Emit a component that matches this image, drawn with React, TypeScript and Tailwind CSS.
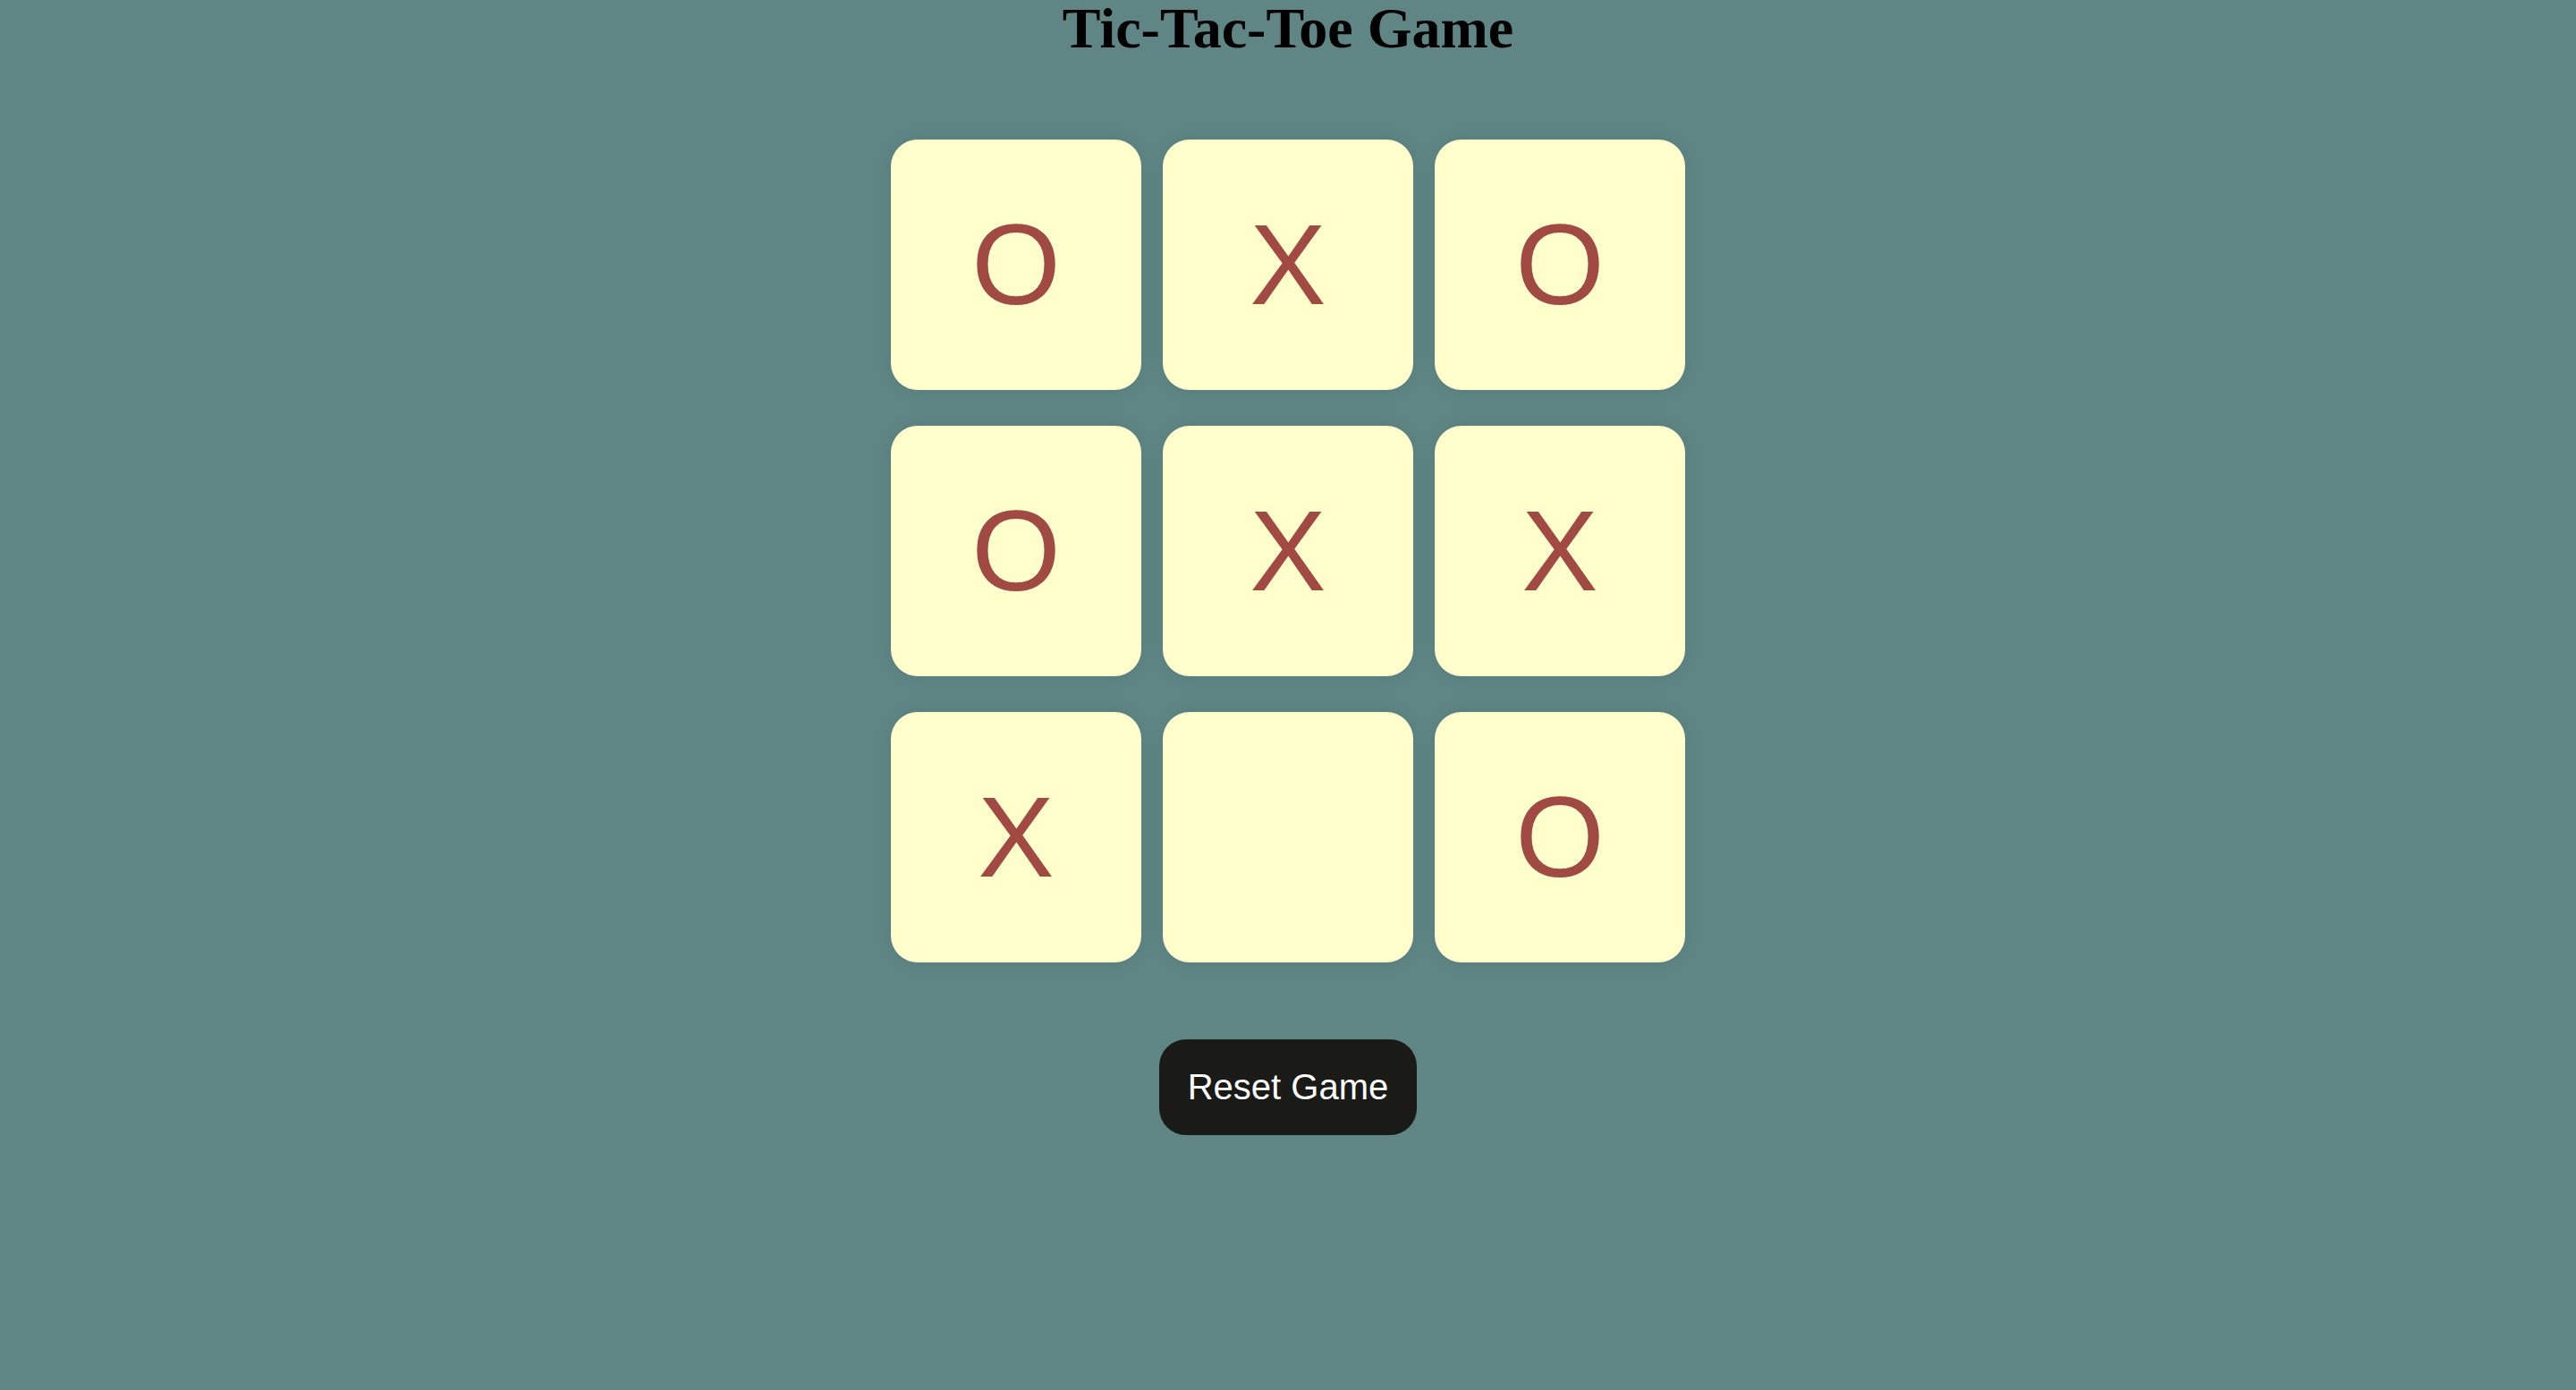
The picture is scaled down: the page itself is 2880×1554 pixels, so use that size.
import { useState } from 'react';

type Cell = 'X' | 'O' | null;

const initialBoard: Cell[] = ['O', 'X', 'O', 'O', 'X', 'X', 'X', null, 'O'];

const App = () => {
  const [board, setBoard] = useState<Cell[]>(initialBoard);
  const [turn, setTurn] = useState<'X' | 'O'>('X');

  const play = (i: number) => {
    if (board[i]) return;
    const next = [...board];
    next[i] = turn;
    setBoard(next);
    setTurn(turn === 'X' ? 'O' : 'X');
  };

  const reset = () => {
    setBoard(Array(9).fill(null));
    setTurn('X');
  };

  return (
    <div className="flex min-h-screen w-full flex-col items-center bg-[#5f8585]">
      <h1 className="m-0 font-['Liberation_Serif',serif] text-[64px] font-bold leading-none text-black">
        Tic-Tac-Toe Game
      </h1>
      <div className="mt-[92px] grid grid-cols-[repeat(3,280px)] gap-x-[24px] gap-y-[40px]">
        {board.map((cell, i) => (
          <button
            key={i}
            onClick={() => play(i)}
            className="flex h-[280px] w-[280px] cursor-pointer items-center justify-center rounded-[30px] bg-[#ffffcc] font-['Liberation_Sans',Arial,sans-serif] text-[128px] text-[#a14a43] shadow-[0_0_20px_rgba(0,0,0,0.07)]"
          >
            {cell}
          </button>
        ))}
      </div>
      <button
        onClick={reset}
        className="mt-[86px] cursor-pointer rounded-[30px] bg-[#1a1a16] px-[32px] py-[30px] font-['Liberation_Sans',Arial,sans-serif] text-[40px] leading-[47px] text-white"
      >
        Reset Game
      </button>
    </div>
  );
};

export default App;
